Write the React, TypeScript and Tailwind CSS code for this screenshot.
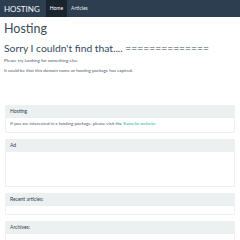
import React from "react";

const font = { fontFamily: "Lato, 'Open Sans', sans-serif" };

const Panel: React.FC<{ title: string; bodyClass: string; children?: React.ReactNode }> = ({
  title,
  bodyClass,
  children,
}) => (
  <div className="mx-[5px] border border-[#ecf0f1] rounded-[1px] bg-white">
    <div className="h-[12px] bg-[#ecf0f1] px-[4px] flex items-center text-[5px] text-[#2c3e50]">
      {title}
    </div>
    <div className={bodyClass}>{children}</div>
  </div>
);

export default function App() {
  return (
    <div className="w-[240px] h-[240px] overflow-hidden bg-white text-[#2c3e50]" style={font}>
      {/* Navbar */}
      <nav className="h-[17px] bg-[#2c3e50] flex items-stretch">
        <div className="flex items-center pl-[4px] pr-[6px] text-[8px] text-[#f4f6f7]">HOSTING</div>
        <div className="flex items-center bg-[#1a242f] px-[4px] text-[5px] text-white">Home</div>
        <div className="flex items-center px-[4px] text-[5px] text-[#e8ecee]">Articles</div>
      </nav>

      {/* Content */}
      <div className="px-[4px]">
        <h1 className="text-[12.5px] leading-none mt-[6px] text-[#3a4a5a]">Hosting</h1>
        <h2 className="text-[10.3px] leading-none mt-[7px] font-normal text-[#34495e]">
          Sorry I couldn't find that.... ==============
        </h2>
        <p className="text-[4.5px] leading-none mt-[6px] text-[#4a5866]">Please try Looking for something else.</p>
        <p className="text-[4.5px] leading-none mt-[6px] text-[#4a5866]">
          It could be that this domain name or hosting package has expired.
        </p>
      </div>

      <div className="mt-[31px] flex flex-col gap-[6px]">
        <Panel title="Hosting" bodyClass="h-[14px] px-[4px] flex items-center text-[4.5px] text-[#4a5866]">
          <span>
            If you are interested in a hosting package, please visit the{" "}
            <span className="text-[#18bc9c]">Kamelio website</span>
          </span>
        </Panel>
        <Panel title="Ad" bodyClass="h-[34px]" />
        <Panel title="Recent articles:" bodyClass="h-[8px]" />
        <Panel title="Archives:" bodyClass="h-[8px]" />
      </div>
    </div>
  );
}
